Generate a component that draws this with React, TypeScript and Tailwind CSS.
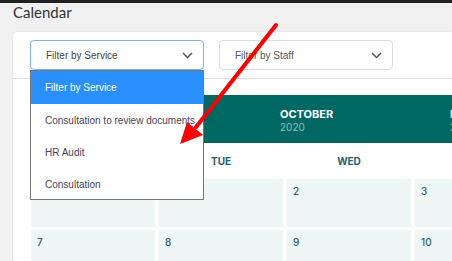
import React, { FC } from "react";

const Chevron: FC = () => (
	<svg width="11" height="7" viewBox="0 0 11 7" fill="none">
		<path d="M1 1l4.5 4.5L10 1" stroke="#555" strokeWidth="1.5" />
	</svg>
);

const options = [
	"Filter by Service",
	"Consultation to review documents",
	"HR Audit",
	"Consultation",
];

const cells = [
	[null, null, "2", "3"],
	["7", "8", "9", "10"],
];

const App: FC = () => {
	return (
		<div className="relative w-[452px] h-[261px] overflow-hidden bg-[#f1f1f1] font-['Liberation_Sans',sans-serif]">
			<div className="h-[3px] bg-[#222]" />
			<h1 className="pl-[13px] h-[29px] text-[15px] leading-[18px] text-[#333] font-['Lato',sans-serif]">
				Calendar
			</h1>
			<div className="ml-[13px] h-[240px] bg-white rounded-tl-[4px] shadow-[0_0_3px_rgba(0,0,0,0.08)]">
				<div className="flex gap-[15px] px-[17px] py-[8px] border-b border-[#dedede]">
					<div className="flex items-center justify-between w-[174px] h-[30px] pl-[15px] pr-[10px] rounded-[4px] border border-[#7fb3d5] text-[10px] text-[#464646]">
						Filter by Service
						<Chevron />
					</div>
					<div className="flex items-center justify-between w-[174px] h-[30px] pl-[15px] pr-[10px] rounded-[4px] border border-[#dcdcdc] text-[10px] text-[#555]">
						Filter by Staff
						<Chevron />
					</div>
				</div>
				<div className="pl-[18px] pt-[16px] font-['Inter',sans-serif] overflow-hidden">
					<div className="flex h-[48px] bg-[#006863] pt-[13px] pl-[249px] gap-[118px] whitespace-nowrap">
						{["OCTOBER", "NOVEMBER"].map((m) => (
							<div key={m} className="w-[52px] shrink-0">
								<div className="text-[11px] leading-[13px] font-bold text-white">{m}</div>
								<div className="text-[10px] leading-[12px] text-[#8fc1bd]">2020</div>
							</div>
						))}
					</div>
					<div className="grid grid-cols-[124px_124px_124px_124px] gap-x-[4px] h-[36px] items-center">
						{["", "TUE", "WED", ""].map((d, i) => (
							<div key={i} className="text-center text-[10px] font-bold text-[#1f5f6e]">
								{d}
							</div>
						))}
					</div>
					<div className="grid grid-cols-[124px_124px_124px_124px] gap-x-[4px] gap-y-[3px]">
						{cells.flat().map((n, i) => (
							<div key={i} className="h-[48px] bg-[#eef7f6] pl-[6px] pt-[5px] text-[10px] font-medium text-[#2a6272]">
								{n}
							</div>
						))}
					</div>
				</div>
			</div>
			<div className="absolute left-[30px] top-[70px] w-[174px] h-[130px] bg-white border border-[#777] text-[10px]">
				{options.map((o, i) => (
					<div
						key={o}
						className={
							i === 0
								? "h-[33px] flex items-center pl-[14px] bg-[#2b90ff] text-white"
								: "h-[32px] flex items-center pl-[14px] text-[#4a3f57]"
						}
					>
						{o}
					</div>
				))}
			</div>
			<svg className="absolute left-0 top-0" width="452" height="261" viewBox="0 0 452 261">
				<line x1="276" y1="25" x2="196" y2="127" stroke="#ff0000" strokeWidth="4" strokeLinecap="round" />
				<polygon points="180,144 187,122 203,135" fill="#ff0000" />
			</svg>
		</div>
	);
};

export default App;
